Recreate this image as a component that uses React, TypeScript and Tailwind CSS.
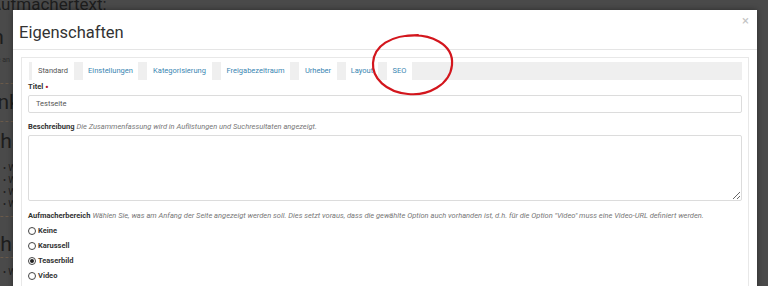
const tabs = [
    { label: 'Standard', w: 'w-[42px]', active: true },
    { label: 'Einstellungen', w: 'w-[55px]' },
    { label: 'Kategorisierung', w: 'w-[65px]' },
    { label: 'Freigabezeitraum', w: 'w-[69px]' },
    { label: 'Urheber', w: 'w-[38px]' },
    { label: 'Layout', w: 'w-[32px]' },
    { label: 'SEO', w: 'w-[25px]' },
];

const options = [
    { label: 'Keine', checked: false },
    { label: 'Karussell', checked: false },
    { label: 'Teaserbild', checked: true },
    { label: 'Video', checked: false },
];

const Radio = ({ checked }: { checked: boolean }) => (
    <span className="w-[8px] h-[8px] rounded-full border border-[#444] bg-white flex items-center justify-center">
        {checked && <span className="w-[4px] h-[4px] rounded-full bg-[#222]" />}
    </span>
);

const App = () => {
    return (
        <div className="relative h-[286px] w-full overflow-hidden bg-[#4a4a4a] font-['Roboto',sans-serif]">
            {/* page behind the overlay */}
            <div className="text-[#1d1d1d] -ml-[10px]">
                <div className="text-[17px] leading-[20px] -mt-[6px]">Aufmachertext:</div>
                <div className="text-[21px] leading-[22px] mt-[12px] -ml-[41px]">Durch</div>
                <div className="text-[7px] leading-[8px] mt-[8px] -ml-[5px] text-[#2a2a2a]">Seite an</div>
                <div className="border-t border-dashed border-[#6a5a4a] mt-[19px] w-[60px]" />
                <div className="text-[21px] leading-[22px] mt-[7px] -ml-[9px]">Link</div>
                <div className="border-t border-dashed border-[#6a5a4a] mt-[8px] w-[60px]" />
                <div className="text-[21px] leading-[22px] mt-[8px] -ml-[7px]">Inhal</div>
                <div className="mt-[10px] ml-[13px] text-[9px] leading-[12px] space-y-0">
                    <div>• W</div>
                    <div>• W</div>
                    <div>• W</div>
                    <div>• W</div>
                </div>
                <div className="border-t border-dashed border-[#6a5a4a] mt-[6px] w-[60px]" />
                <div className="text-[21px] leading-[22px] mt-[16px] -ml-[7px]">Inhal</div>
                <div className="border-t border-dashed border-[#6a5a4a] mt-[2px] w-[60px]" />
                <div className="mt-[8px] ml-[13px] text-[9px] leading-[12px]">• W</div>
            </div>

            {/* modal */}
            <div className="absolute left-[13px] top-[10px] w-[744px] h-[290px] bg-white shadow-[0_0_6px_rgba(0,0,0,0.4)]">
                <div className="relative h-[40px] border-b border-[#e5e5e5] px-[6px] flex items-center pt-[8px]">
                    <h1 className="text-[16.5px] font-normal text-[#333]">Eigenschaften</h1>
                    <span className="absolute right-[8px] top-[1px] text-[13px] text-[#c4c4c4]">×</span>
                </div>

                <div className="px-[8px] pt-[7px]">
                    <div className="border border-[#e8e8e8] pl-[6px] pr-[6px] pt-[4px] h-[240px]">
                        {/* tabs */}
                        <div className="ml-[1px] h-[18px] bg-[#efefef] pl-[3px] flex gap-[9px]">
                            {tabs.map((tab) => (
                                <div
                                    key={tab.label}
                                    className={`${tab.w} h-[18px] bg-white flex items-center justify-center text-[7.5px] whitespace-nowrap ${
                                        tab.active ? 'text-[#555]' : 'text-[#3a86b2]'
                                    }`}
                                >
                                    {tab.label}
                                </div>
                            ))}
                        </div>

                        {/* Titel */}
                        <div className="mt-[2px] h-[10px] flex items-center gap-[2px] text-[7.5px] font-bold text-[#333]">
                            Titel <span className="text-[#b0152a] text-[9px] leading-none">•</span>
                        </div>
                        <div className="mt-[3px] h-[18px] border border-[#dcdcdc] rounded-[2px] pl-[7px] flex items-center text-[7.5px] text-[#555]">
                            Testseite
                        </div>

                        {/* Beschreibung */}
                        <div className="mt-[9px] h-[10px] flex items-center text-[7.5px] text-[#333]">
                            <span className="font-bold">Beschreibung</span>
                            <span className="italic text-[#777] ml-[2px]">
                                Die Zusammenfassung wird in Auflistungen und Suchresultaten angezeigt.
                            </span>
                        </div>
                        <textarea
                            readOnly
                            className="mt-[3px] block w-full h-[66px] border border-[#dcdcdc] rounded-[2px] resize-y outline-none"
                        />

                        {/* Aufmacherbereich */}
                        <div className="mt-[10px] h-[10px] flex items-center text-[7.5px] text-[#333] whitespace-nowrap">
                            <span className="font-bold">Aufmacherbereich</span>
                            <span className="italic text-[#777] ml-[2px]">
                                Wählen Sie, was am Anfang der Seite angezeigt werden soll. Dies setzt voraus, dass die gewählte Option auch vorhanden ist, d.h. für die Option "Video" muss eine Video-URL definiert werden.
                            </span>
                        </div>
                        <div className="mt-[2px]">
                            {options.map((opt) => (
                                <div key={opt.label} className="h-[15px] flex items-center gap-[2px] text-[7.5px] font-bold text-[#333]">
                                    <Radio checked={opt.checked} />
                                    {opt.label}
                                </div>
                            ))}
                        </div>
                    </div>
                </div>
            </div>

            {/* red marker circle */}
            <svg className="absolute left-[368px] top-[30px]" width="92" height="70" viewBox="0 0 92 70" fill="none">
                <path
                    d="M38 6 C62 3, 86 14, 84 35 C82 55, 60 66, 40 64 C18 62, 4 48, 5 33 C6 16, 22 5, 50 5"
                    stroke="#d3161d"
                    strokeWidth="2.2"
                    strokeLinecap="round"
                />
            </svg>
        </div>
    );
};

export default App;
